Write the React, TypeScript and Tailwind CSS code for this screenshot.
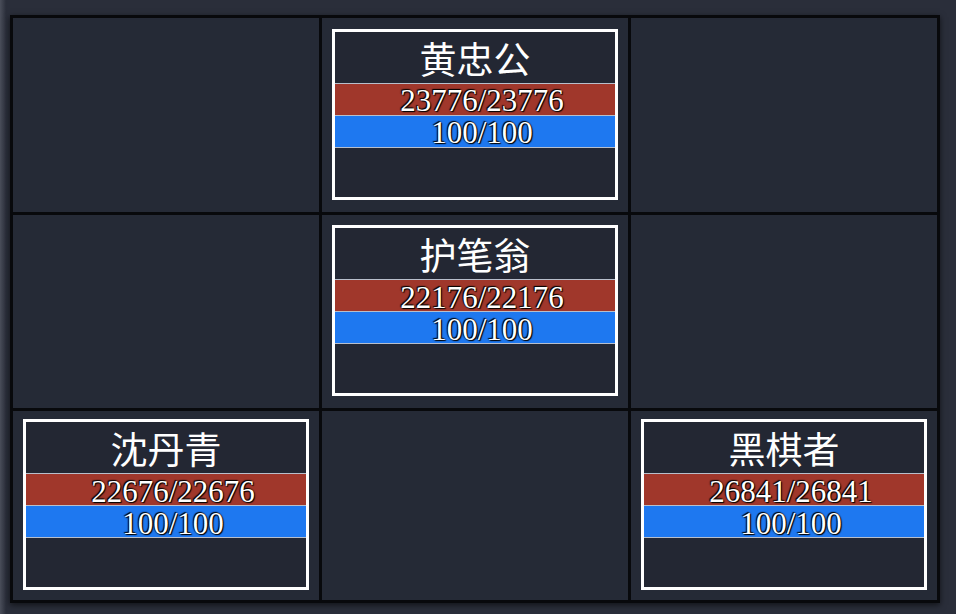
const units = [
  { cell: 1, name: "黄忠公", hp: "23776/23776", mp: "100/100" },
  { cell: 4, name: "护笔翁", hp: "22176/22176", mp: "100/100" },
  { cell: 6, name: "沈丹青", hp: "22676/22676", mp: "100/100" },
  { cell: 8, name: "黑棋者", hp: "26841/26841", mp: "100/100" },
];

function UnitCard({ name, hp, mp }: { name: string; hp: string; mp: string }) {
  return (
    <div className="mb-[2px] flex h-[171px] w-[286px] flex-col border-[3px] border-white bg-[#232733]">
      <div className="flex h-[51px] items-center justify-center pt-[2px] font-['Noto_Sans_CJK_SC','Noto_Sans',sans-serif] text-[37px] leading-none text-white">
        {name}
      </div>
      <div className="flex h-[33px] items-center justify-center border-y border-[#b8bfcc] bg-[#a0372b] pl-[14px] pt-[3px] font-['Liberation_Serif',serif] text-[31px] leading-none text-white [text-shadow:0_0_2px_#000,1px_1px_1px_#000,-1px_-1px_1px_#000]">
        {hp}
      </div>
      <div className="flex h-[32px] items-center justify-center border-b border-[#b8bfcc] bg-[#1e78f0] pl-[14px] pt-[3px] font-['Liberation_Serif',serif] text-[31px] leading-none text-white [text-shadow:0_0_2px_#000,1px_1px_1px_#000,-1px_-1px_1px_#000]">
        {mp}
      </div>
    </div>
  );
}

export default function App() {
  const cells = Array.from({ length: 9 }, (_, i) => units.find((u) => u.cell === i));
  return (
    <div className="h-[614px] w-[956px] bg-[linear-gradient(90deg,#4a4e5a_0px,#2a2e3a_6px,#2a2e3a_100%)] pl-[10px] pt-[15px]">
      <div className="grid h-[588px] w-[930px] grid-cols-3 grid-rows-[194px_193px_189px] gap-[3px] bg-[#08090c] p-[3px] shadow-[0_2px_6px_rgba(0,0,0,0.6)]">
        {cells.map((u, i) => (
          <div key={i} className="flex items-center justify-center bg-[#252a36]">
            {u && <UnitCard name={u.name} hp={u.hp} mp={u.mp} />}
          </div>
        ))}
      </div>
    </div>
  );
}
